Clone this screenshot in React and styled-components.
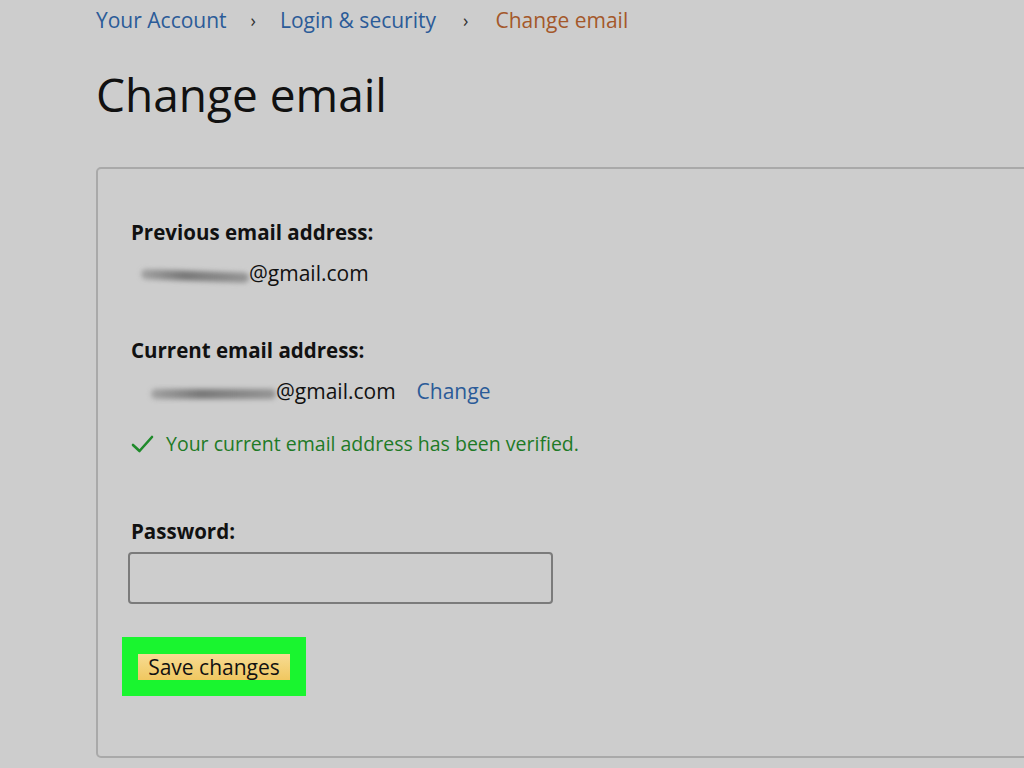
import React from "react";
import styled, { createGlobalStyle } from "styled-components";

const Global = createGlobalStyle`
  html, body { margin: 0; padding: 0; background: #cdcdcd; }
  body { font-family: "Open Sans", "Noto Sans", sans-serif; color: #111; }
`;

const Page = styled.div`
  width: 1024px;
  height: 768px;
  overflow: hidden;
  padding-left: 96px;
  box-sizing: border-box;
`;

const Crumbs = styled.nav`
  display: flex;
  align-items: center;
  height: 40px;
  font-size: 21px;
`;

const Crumb = styled.span`
  color: ${(p) => (p.$current ? "#a4582a" : "#2b5b98")};
`;

const Sep = styled.span`
  color: #333;
  font-size: 18px;
  margin: 0 ${(p) => p.$gap || 24}px;
`;

const Title = styled.h1`
  margin: 26px 0 0;
  font-size: 46px;
  font-weight: 400;
  line-height: 56px;
  color: #111;
`;

const Card = styled.section`
  margin-top: 45px;
  width: 1000px;
  height: 591px;
  border: 2px solid #a9a9a9;
  border-radius: 5px;
  box-sizing: border-box;
  padding: 50px 0 0 33px;
  display: flex;
  flex-direction: column;
`;

const Label = styled.div`
  font-weight: 700;
  font-size: 20.5px;
  line-height: 26px;
  color: #111;
`;

const EmailRow = styled.div`
  display: flex;
  align-items: center;
  margin-top: 15px;
  font-size: 21px;
  line-height: 26px;
  padding-left: ${(p) => p.$indent}px;
`;

const Blur = styled.span`
  display: inline-block;
  width: ${(p) => p.$w}px;
  height: 10px;
  border-radius: 6px;
  background: linear-gradient(90deg, rgba(120,120,120,0.5), rgba(110,110,110,0.9) 40%, rgba(130,130,130,0.75));
  filter: blur(2.5px);
  transform: translateY(3px) ${(p) => p.$tilt || ""};
`;

const Link = styled.span`
  color: #2b5b98;
  margin-left: 21px;
`;

const Section = styled.div`
  margin-top: ${(p) => p.$top}px;
  display: flex;
  flex-direction: column;
`;

const Verified = styled.div`
  display: flex;
  align-items: center;
  gap: 12px;
  margin-top: 27px;
  color: #1e7a26;
  font-size: 19.5px;
  line-height: 26px;
`;

const Input = styled.div`
  margin-top: 8px;
  margin-left: -3px;
  width: 425px;
  height: 52px;
  border: 2px solid #7b7b7b;
  border-radius: 4px;
  box-sizing: border-box;
`;

const Highlight = styled.div`
  margin-top: 33px;
  margin-left: -9px;
  width: 184px;
  height: 59px;
  background: #19f52f;
  display: flex;
  align-items: center;
  padding-left: 16px;
  box-sizing: border-box;
`;

const Button = styled.div`
  width: 152px;
  height: 26px;
  background: linear-gradient(#f7dc93, #f0c760);
  color: #111;
  font-size: 21px;
  line-height: 26px;
  text-align: center;
`;

export default function App() {
  return (
    <>
      <Global />
      <Page>
        <Crumbs>
          <Crumb>Your Account</Crumb>
          <Sep>›</Sep>
          <Crumb>Login &amp; security</Crumb>
          <Sep $gap={27}>›</Sep>
          <Crumb $current>Change email</Crumb>
        </Crumbs>
        <Title>Change email</Title>
        <Card>
          <Section $top={0}>
            <Label>Previous email address:</Label>
            <EmailRow $indent={10}>
              <Blur $w={108} $tilt="rotate(2deg)" />
              <span>@gmail.com</span>
            </EmailRow>
          </Section>
          <Section $top={51}>
            <Label>Current email address:</Label>
            <EmailRow $indent={20}>
              <Blur $w={125} />
              <span>@gmail.com</span>
              <Link>Change</Link>
            </EmailRow>
            <Verified>
              <svg width="23" height="20" viewBox="0 0 23 20">
                <path d="M2 11 L8.5 17 L21 3" fill="none" stroke="#1e8a2a" strokeWidth="2.6" strokeLinecap="round" strokeLinejoin="round" />
              </svg>
              <span>Your current email address has been verified.</span>
            </Verified>
          </Section>
          <Section $top={61}>
            <Label>Password:</Label>
            <Input />
          </Section>
          <Highlight>
            <Button>Save changes</Button>
          </Highlight>
        </Card>
      </Page>
    </>
  );
}
